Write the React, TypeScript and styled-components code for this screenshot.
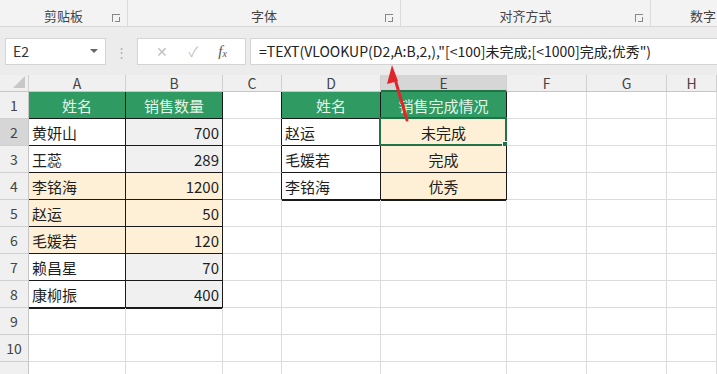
import React from 'react';
import styled, { createGlobalStyle } from 'styled-components';

const GlobalStyle = createGlobalStyle`
  html, body {
    margin: 0;
    padding: 0;
    background: #ffffff;
    font-family: "Noto Sans CJK SC", "Noto Sans", sans-serif;
    overflow: hidden;
  }
`;

type Fill = 'none' | 'green' | 'orange' | 'gray';
type Align = 'left' | 'right' | 'center';

interface CellData {
  text?: string;
  fill?: Fill;
  align?: Align;
  boxed?: boolean; // part of a bordered table
  leftEdge?: boolean; // first column of a table
}

const columns = ['A', 'B', 'C', 'D', 'E', 'F', 'G', 'H'];
const colWidths = '29px 97px 97px 59px 99px 126px 80px 80px 1fr';

const left = [
  ['黄妍山', '700', 'w'],
  ['王蕊', '289', 'w'],
  ['李铭海', '1200', 'o'],
  ['赵运', '50', 'o'],
  ['毛媛若', '120', 'o'],
  ['赖昌星', '70', 'w'],
  ['康柳振', '400', 'w'],
];

const right = [
  ['赵运', '未完成'],
  ['毛媛若', '完成'],
  ['李铭海', '优秀'],
];

function buildRow(r: number): CellData[] {
  const row: CellData[] = Array.from({ length: 8 }, () => ({}));
  if (r === 1) {
    row[0] = { text: '姓名', fill: 'green', align: 'center', boxed: true, leftEdge: true };
    row[1] = { text: '销售数量', fill: 'green', align: 'center', boxed: true };
    row[3] = { text: '姓名', fill: 'green', align: 'center', boxed: true, leftEdge: true };
    row[4] = { text: '销售完成情况', fill: 'green', align: 'center', boxed: true };
    return row;
  }
  const l = left[r - 2];
  if (l) {
    const orange = l[2] === 'o';
    row[0] = { text: l[0], fill: orange ? 'orange' : 'none', align: 'left', boxed: true, leftEdge: true };
    row[1] = { text: l[1], fill: orange ? 'orange' : 'gray', align: 'right', boxed: true };
  }
  const d = right[r - 2];
  if (d) {
    row[3] = { text: d[0], align: 'left', boxed: true, leftEdge: true };
    row[4] = { text: d[1], fill: 'orange', align: 'center', boxed: true };
  }
  return row;
}

export default function App() {
  const rows = Array.from({ length: 11 }, (_, i) => i + 1);
  return (
    <Page>
      <GlobalStyle />
      <Ribbon>
        <Group style={{ width: 127 }}>
          <GroupLabel>剪贴板</GroupLabel>
          <Launcher />
        </Group>
        <Group style={{ width: 272 }}>
          <GroupLabel>字体</GroupLabel>
          <Launcher />
        </Group>
        <Group style={{ width: 249 }}>
          <GroupLabel>对齐方式</GroupLabel>
          <Launcher />
        </Group>
        <Group $last>
          <GroupLabel>数字</GroupLabel>
        </Group>
      </Ribbon>

      <FormulaBand>
        <NameBox>
          <span>E2</span>
          <Caret />
        </NameBox>
        <Grip>⋮</Grip>
        <FxBox>
          <FxIcon>✕</FxIcon>
          <FxIcon>✓</FxIcon>
          <FxMark>
            f<sub>x</sub>
          </FxMark>
        </FxBox>
        <FormulaInput>=TEXT(VLOOKUP(D2,A:B,2,),"[&lt;100]未完成;[&lt;1000]完成;优秀")</FormulaInput>
      </FormulaBand>

      <Sheet>
        <Corner>
          <svg width="12" height="12" viewBox="0 0 12 12">
            <polygon points="12,0 12,12 0,12" fill="#c8c8c8" />
          </svg>
        </Corner>
        {columns.map((c) => (
          <ColHead key={c} $active={c === 'E'}>
            {c}
          </ColHead>
        ))}

        {rows.map((r) => {
          const cells = buildRow(r);
          const above = r > 1 ? buildRow(r - 1) : [];
          return (
            <React.Fragment key={r}>
              {/* the 11th row only peeks in at the bottom edge */}
              <RowHead $active={r === 2}>{r < 11 ? r : ''}</RowHead>
              {cells.map((cell, ci) => (
                <Cell
                  key={ci}
                  $fill={cell.fill ?? 'none'}
                  $align={cell.align ?? 'left'}
                  $boxed={!!cell.boxed}
                  $belowBox={!cell.boxed && !!above[ci]?.boxed}
                  $beforeBox={!cell.boxed && !!cells[ci + 1]?.leftEdge}
                >
                  {cell.text}
                  {r === 2 && ci === 4 && (
                    <Selection>
                      <Handle />
                    </Selection>
                  )}
                </Cell>
              ))}
            </React.Fragment>
          );
        })}

        <Arrow width="40" height="80" viewBox="0 0 40 80">
          <line x1="26" y1="63" x2="14" y2="22" stroke="#e0262a" strokeWidth="3" strokeLinecap="round" />
          <polygon points="11,8 6,27 17,24" fill="#e0262a" />
        </Arrow>
      </Sheet>
    </Page>
  );
}

// Styled components

const Page = styled.div`
  width: 717px;
  height: 374px;
  background: #ffffff;
  display: flex;
  flex-direction: column;
  overflow: hidden;
`;

const Ribbon = styled.div`
  height: 26px;
  flex: none;
  display: flex;
  background: #f3f3f3;
  border-bottom: 1px solid #d8d8d8;
  box-shadow: 0 1px 2px rgba(0, 0, 0, 0.08);
`;

const Group = styled.div<{ $last?: boolean }>`
  position: relative;
  display: flex;
  align-items: center;
  justify-content: center;
  flex: ${(p) => (p.$last ? '1' : 'none')};
  border-right: ${(p) => (p.$last ? 'none' : '1px solid #dadada')};
  padding-left: ${(p) => (p.$last ? '38px' : '0')};
`;

const GroupLabel = styled.span`
  font-size: 13px;
  color: #444;
  margin-top: 4px;
`;

const Launcher = styled.span`
  position: absolute;
  right: 7px;
  bottom: 4px;
  width: 7px;
  height: 7px;
  border-left: 1px solid #888;
  border-top: 1px solid #888;
  &::after {
    content: '';
    position: absolute;
    left: 2px;
    top: 2px;
    width: 4px;
    height: 4px;
    border-right: 1px solid #888;
    border-bottom: 1px solid #888;
  }
`;

const FormulaBand = styled.div`
  height: 48px;
  flex: none;
  display: flex;
  align-items: center;
  background: #ececec;
  padding: 0 0 0 5px;
  box-sizing: border-box;
`;

const NameBox = styled.div`
  width: 101px;
  height: 27px;
  box-sizing: border-box;
  background: #fff;
  border: 1px solid #d4d4d4;
  display: flex;
  align-items: center;
  justify-content: space-between;
  padding: 0 7px 0 7px;
  font-size: 14px;
  color: #333;
`;

const Caret = styled.span`
  width: 0;
  height: 0;
  border-left: 4px solid transparent;
  border-right: 4px solid transparent;
  border-top: 4px solid #666;
`;

const Grip = styled.span`
  width: 31px;
  text-align: center;
  color: #b0b0b0;
  font-size: 13px;
`;

const FxBox = styled.div`
  width: 109px;
  height: 27px;
  box-sizing: border-box;
  background: #fff;
  border: 1px solid #d4d4d4;
  display: flex;
  align-items: center;
  justify-content: space-around;
  padding: 0 8px 0 8px;
`;

const FxIcon = styled.span`
  color: #c2c2c2;
  font-size: 14px;
`;

const FxMark = styled.span`
  font-family: "Liberation Serif", serif;
  font-style: italic;
  font-size: 15px;
  color: #555;
  sub {
    font-size: 10px;
    vertical-align: -1px;
  }
`;

const FormulaInput = styled.div`
  flex: 1;
  height: 27px;
  margin-left: 4px;
  box-sizing: border-box;
  background: #fff;
  border: 1px solid #d4d4d4;
  border-right: none;
  display: flex;
  align-items: center;
  padding-left: 8px;
  font-size: 14px;
  color: #222;
  white-space: nowrap;
`;

const Sheet = styled.div`
  position: relative;
  display: grid;
  grid-template-columns: ${colWidths};
  grid-template-rows: 17px repeat(11, 27px);
  background: #fff;
`;

const Corner = styled.div`
  background: #f0f0f0;
  border-right: 1px solid #d0d0d0;
  border-bottom: 1px solid #c6c6c6;
  display: flex;
  align-items: flex-end;
  justify-content: flex-end;
  padding: 0 3px 3px 0;
  box-sizing: border-box;
`;

const ColHead = styled.div<{ $active?: boolean }>`
  background: ${(p) => (p.$active ? '#d6d6d6' : '#f0f0f0')};
  border-right: 1px solid #d0d0d0;
  border-bottom: ${(p) => (p.$active ? '2px solid #217346' : '1px solid #c6c6c6')};
  box-sizing: border-box;
  display: flex;
  align-items: center;
  justify-content: center;
  font-size: 14px;
  color: #444;
  line-height: 1;
`;

const RowHead = styled.div<{ $active?: boolean }>`
  background: ${(p) => (p.$active ? '#d6d6d6' : '#f0f0f0')};
  border-right: 1px solid #c6c6c6;
  border-bottom: 1px solid #d0d0d0;
  box-sizing: border-box;
  display: flex;
  align-items: center;
  justify-content: center;
  font-size: 14px;
  color: #444;
`;

const fills: Record<Fill, string> = {
  none: '#ffffff',
  green: '#2f9a62',
  orange: '#fdf0d6',
  gray: '#f0f0f0',
};

const Cell = styled.div<{
  $fill: Fill;
  $align: Align;
  $boxed: boolean;
  $belowBox: boolean;
  $beforeBox: boolean;
}>`
  position: relative;
  box-sizing: border-box;
  background: ${(p) => fills[p.$fill]};
  border-right: 1px solid ${(p) => (p.$boxed || p.$beforeBox ? '#1a1a1a' : '#dcdcdc')};
  border-bottom: 1px solid ${(p) => (p.$boxed ? '#1a1a1a' : '#dcdcdc')};
  box-shadow: ${(p) => (p.$belowBox ? 'inset 0 1px 0 #1a1a1a' : 'none')};
  display: flex;
  align-items: center;
  justify-content: ${(p) => (p.$align === 'left' ? 'flex-start' : p.$align === 'right' ? 'flex-end' : 'center')};
  padding: 0 3px 0 3px;
  font-size: 15px;
  color: ${(p) => (p.$fill === 'green' ? '#e4f6ea' : '#1e1e1e')};
  white-space: nowrap;
`;

const Selection = styled.div`
  position: absolute;
  left: -2px;
  top: -2px;
  right: -1px;
  bottom: -1px;
  border: 2px solid #217346;
  pointer-events: none;
`;

const Handle = styled.div`
  position: absolute;
  right: -5px;
  bottom: -5px;
  width: 6px;
  height: 6px;
  background: #217346;
  border: 1px solid #fff;
`;

const Arrow = styled.svg`
  position: absolute;
  left: 381px;
  top: -18px;
  overflow: visible;
`;
